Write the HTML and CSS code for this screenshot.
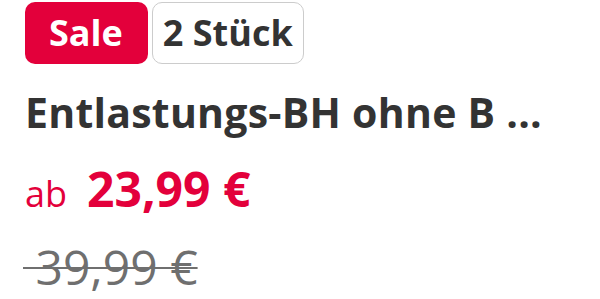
FILE: index.html
```html
<!DOCTYPE html>
<html lang="de">
<head>
    <meta charset="UTF-8">
    <meta name="viewport" content="width=device-width, initial-scale=1.0">
    <title>Produkt</title>
    <link rel="stylesheet" href="styles.css">
</head>
<body>
    <div class="product-tile">
        <div class="badges">
            <span class="badge badge-sale">Sale</span>
            <span class="badge badge-pack">2 Stück</span>
        </div>
        <h2 class="product-name">Entlastungs-BH ohne B ...</h2>
        <div class="price">
            <span class="price-from">ab</span>
            <span class="price-value">23,99 €</span>
        </div>
        <div class="price-old"><s>&nbsp;39,99 €</s></div>
    </div>
</body>
</html>
```

FILE: styles.css
```css
body {
    font-family: "Open Sans", Arial, sans-serif;
    margin: 0;
    padding: 2px 25px 0;
    background: white;
    color: #333;
}
.badges {
    display: flex;
    gap: 4px;
}
.badge {
    display: block;
    font-size: 36px;
    font-weight: 700;
    line-height: 62px;
    height: 62px;
    border-radius: 10px;
    box-sizing: border-box;
}
.badge-sale {
    background: #e3003b;
    color: white;
    padding: 0 25px 0 24px;
}
.badge-pack {
    border: 1px solid #ccc;
    padding: 0 10px 0 10px;
    color: #333;
    line-height: 60px;
}
.product-name {
    margin: 20px 0 0;
    font-size: 41px;
    letter-spacing: 0.25px;
    font-weight: 700;
    line-height: 56px;
    white-space: nowrap;
}
.price {
    margin-top: 19px;
    display: flex;
    align-items: baseline;
    gap: 20px;
    color: #e3003b;
    line-height: 60px;
}
.price-from {
    font-size: 36px;
    font-weight: 400;
}
.price-value {
    font-size: 48px;
    font-weight: 700;
}
.price-old {
    margin-top: 13px;
    font-size: 48px;
    line-height: 60px;
    color: #6f6f6f;
}
.price-old s {
    margin-left: -2px;
    text-decoration-thickness: 1.5px;
}
```
